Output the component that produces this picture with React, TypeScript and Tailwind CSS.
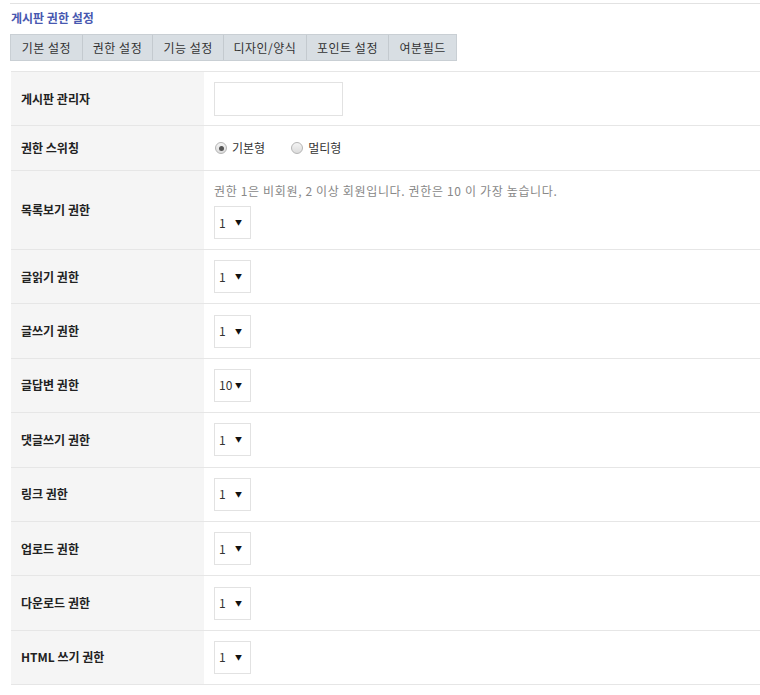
const font = { fontFamily: '"Noto Sans CJK KR", "Noto Sans", sans-serif' };

const tabs = [
  { label: "기본 설정", w: "w-[71px]" },
  { label: "권한 설정", w: "w-[71px]" },
  { label: "기능 설정", w: "w-[71px]" },
  { label: "디자인/양식", w: "w-[83px]" },
  { label: "포인트 설정", w: "w-[83px]" },
  { label: "여분필드", w: "w-[68px]" },
];

const levels = [
  { label: "글읽기 권한", value: "1" },
  { label: "글쓰기 권한", value: "1" },
  { label: "글답변 권한", value: "10" },
  { label: "댓글쓰기 권한", value: "1" },
  { label: "링크 권한", value: "1" },
  { label: "업로드 권한", value: "1" },
  { label: "다운로드 권한", value: "1" },
  { label: "HTML 쓰기 권한", value: "1" },
];

function LevelSelect({ value }: { value: string }) {
  return (
    <div className="flex h-[33px] w-[37px] items-center justify-between border border-[#e2e2e2] bg-white pl-[4px] pr-[8px] text-[12px] text-[#333]">
      <span>{value}</span>
      <span className="text-[7px] leading-none text-[#111]">▼</span>
    </div>
  );
}

function Radio({ checked, label }: { checked?: boolean; label: string }) {
  return (
    <label className="flex items-center gap-[5px] text-[12px] text-[#333]">
      <span className="flex h-[12px] w-[12px] items-center justify-center rounded-full border border-[#b5b5b5] bg-gradient-to-b from-[#f4f4f4] to-[#dcdcdc]">
        {checked && <span className="h-[5px] w-[5px] rounded-full bg-[#555]" />}
      </span>
      {label}
    </label>
  );
}

function Row({ label, h, children }: { label: string; h: string; children: React.ReactNode }) {
  return (
    <div className={`flex border-b border-[#e6e6e6] ${h}`}>
      <div className="flex w-[193px] shrink-0 items-center bg-[#f5f5f5] pl-[10px] text-[12px] font-bold text-[#222]">
        {label}
      </div>
      <div className="flex flex-1 items-center pl-[10px]">{children}</div>
    </div>
  );
}

export default function App() {
  return (
    <div className="min-h-screen bg-white pl-[10px] pt-[3px]" style={font}>
      <div className="border-t border-[#e2e2e2]">
        <h2 className="pl-[1px] pt-[4px] text-[12px] font-bold leading-[20px] text-[#4858b0]">게시판 권한 설정</h2>
        <div className="mt-[6px] flex h-[27px] w-[447px] border border-[#c9cfd4] bg-[#d8dee3]">
          {tabs.map((t, i) => (
            <div
              key={t.label}
              className={`flex items-center justify-center text-[12px] tracking-[0.5px] text-[#333] ${t.w} ${i > 0 ? "border-l border-[#c4cacf]" : ""}`}
            >
              {t.label}
            </div>
          ))}
        </div>
        <div className="ml-[1px] mt-[10px] border-t border-[#e6e6e6]">
          <Row label="게시판 관리자" h="h-[54px]">
            <div className="h-[34px] w-[129px] border border-[#e2e2e2] bg-white" />
          </Row>
          <Row label="권한 스위칭" h="h-[45px]">
            <div className="flex items-center gap-[26px] pl-[1px]">
              <Radio checked label="기본형" />
              <Radio label="멀티형" />
            </div>
          </Row>
          <div className="flex h-[79px] border-b border-[#e6e6e6]">
            <div className="flex w-[193px] shrink-0 items-center bg-[#f5f5f5] pl-[10px] text-[12px] font-bold text-[#222]">
              목록보기 권한
            </div>
            <div className="flex flex-1 flex-col pl-[10px] pt-[12px]">
              <p className="text-[12px] leading-[16px] tracking-[0.65px] text-[#888]">
                권한 1은 비회원, 2 이상 회원입니다. 권한은 10 이 가장 높습니다.
              </p>
              <div className="mt-[7px]">
                <LevelSelect value="1" />
              </div>
            </div>
          </div>
          {levels.map((l) => (
            <Row key={l.label} label={l.label} h="h-[54.4px]">
              <LevelSelect value={l.value} />
            </Row>
          ))}
        </div>
      </div>
    </div>
  );
}
